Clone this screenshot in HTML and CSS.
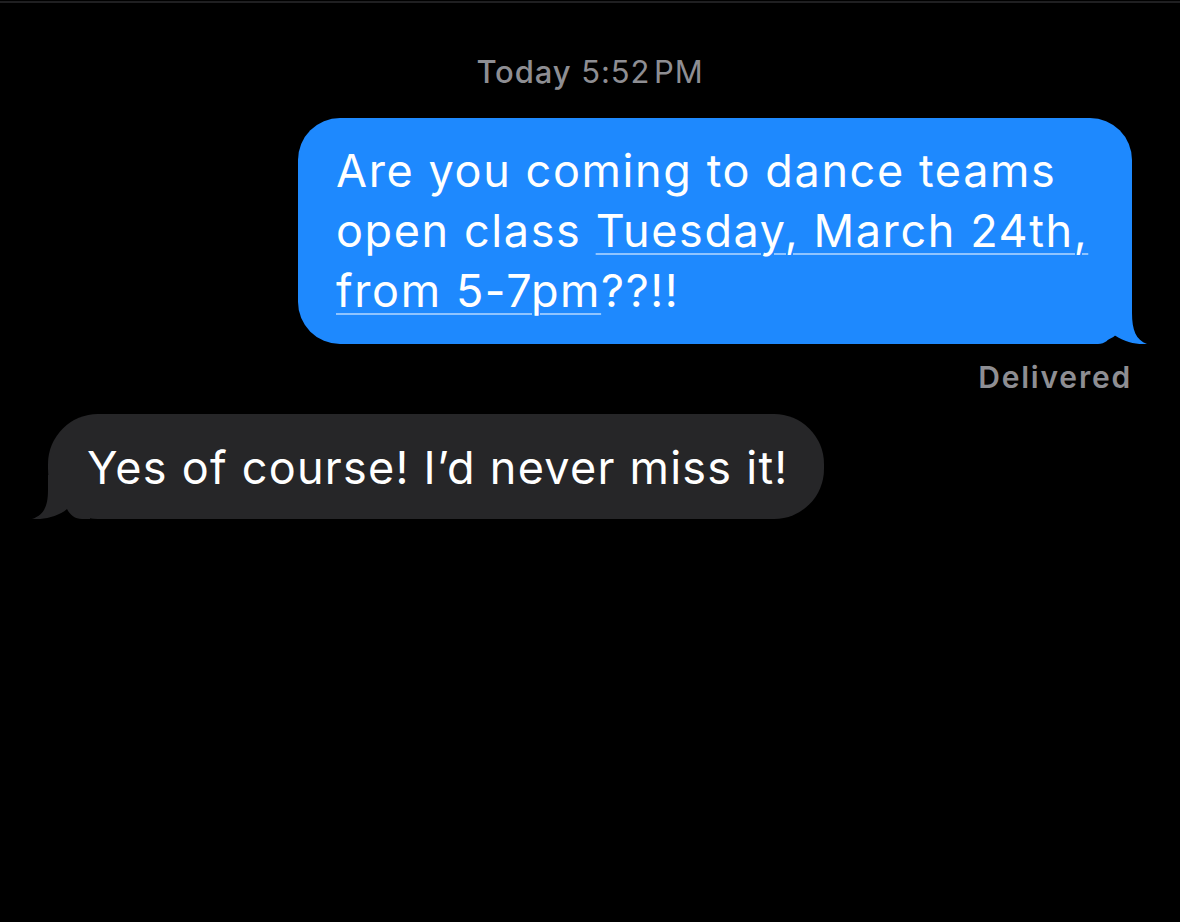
FILE: index.html
```html
<!DOCTYPE html>
<html>
<head>
<meta charset="utf-8">
<link rel="stylesheet" href="styles.css">
</head>
<body>
<div class="topline"></div>
<main class="thread">
  <div class="stamp"><span class="stamp-day">Today</span> 5:52&#8202;PM</div>
  <div class="row row-sent">
    <div class="bubble sent">
      <span class="line">Are you coming to dance teams</span><br>
      <span class="line">open class <span class="link">Tuesday, March 24th,</span></span><br>
      <span class="line"><span class="link">from 5-7pm</span>??!!</span>
      <svg class="tail tail-sent" viewBox="-42 -44 58 44" width="58" height="44" aria-hidden="true">
        <path d="M -42 -44 L 0 -44 L 0 -31 C 0 -14 4 -4 15 0 C 6 1 -10 -2 -20 -11 C -23 -4 -27 0 -34 0 L -42 0 Z"/>
      </svg>
    </div>
  </div>
  <div class="status">Delivered</div>
  <div class="row row-recv">
    <div class="bubble recv">
      <span class="line">Yes of course! I’d never miss it!</span>
      <svg class="tail tail-recv" viewBox="-42 -44 58 44" width="58" height="44" aria-hidden="true">
        <path d="M -42 -44 L 0 -44 L 0 -29 C 0 -13 4 -4 16 0 C 6 1 -10 -2 -19 -10 C -22 -4 -27 0 -34 0 L -42 0 Z"/>
      </svg>
    </div>
  </div>
</main>
</body>
</html>
```
FILE: styles.css
```css
html, body {
  margin: 0;
  padding: 0;
  background: #000;
}
body {
  width: 1180px;
  height: 922px;
  overflow: hidden;
  font-family: Inter, "Noto Sans", "Liberation Sans", sans-serif;
  color: #fff;
}
.topline {
  margin-top: 1px;
  height: 2px;
  background: #1f1f21;
}
.thread {
  padding: 0 48px;
  display: flex;
  flex-direction: column;
}
.stamp {
  margin-top: 49px;
  text-align: center;
  font-size: 31px;
  line-height: 40px;
  letter-spacing: 0.9px;
  color: #8e8e93;
  font-weight: 400;
}
.stamp-day {
  font-weight: 500;
}
.row {
  display: flex;
}
.row-sent {
  justify-content: flex-end;
  margin-top: 26px;
}
.row-recv {
  justify-content: flex-start;
  margin-top: 19px;
}
.bubble {
  position: relative;
  font-size: 45px;
  line-height: 60px;
  letter-spacing: 1.6px;
  white-space: nowrap;
  border-radius: 42px;
}
.sent {
  background: #1e89fe;
  width: 834px;
  box-sizing: border-box;
  padding: 23px 38px 23px 38px;
}
.recv {
  background: #262628;
  width: 776px;
  box-sizing: border-box;
  padding: 24px 39px 21px 39px;
  border-radius: 50px;
  letter-spacing: 1.25px;
}
.link {
  text-decoration: underline;
  text-decoration-color: rgba(255, 255, 255, 0.5);
  text-decoration-thickness: 2px;
  text-underline-offset: 6px;
}
.tail {
  position: absolute;
  bottom: 0;
  display: block;
}
.tail-sent {
  right: -16px;
  fill: #1e89fe;
}
.tail-recv {
  left: -16px;
  transform: scaleX(-1);
  fill: #262628;
}
.status {
  margin-top: 15px;
  align-self: flex-end;
  font-size: 30px;
  line-height: 36px;
  letter-spacing: 1.8px;
  font-weight: 600;
  color: #8e8e93;
  margin-right: 0;
}
```
